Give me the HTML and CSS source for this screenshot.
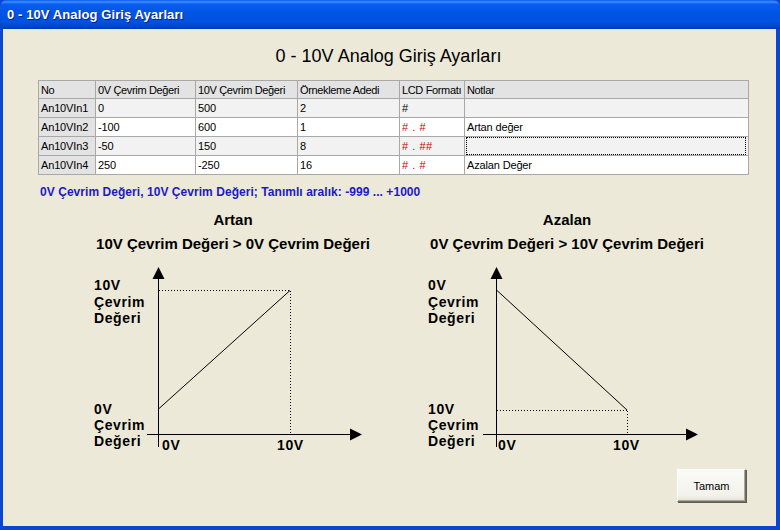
FILE: index.html
```html
<!DOCTYPE html>
<html lang="tr">
<head>
<meta charset="utf-8">
<title>0 - 10V Analog Giriş Ayarları</title>
<link rel="stylesheet" href="styles.css">
</head>
<body>
<div class="window">
  <div class="titlebar"><span class="title-text">0 - 10V Analog Giriş Ayarları</span></div>
  <div class="content">
    <h1 class="heading">0 - 10V Analog Giriş Ayarları</h1>
    <table class="grid">
      <colgroup>
        <col class="c-no"><col class="c-0v"><col class="c-10v"><col class="c-ornek"><col class="c-lcd"><col class="c-not">
      </colgroup>
      <thead>
        <tr><th>No</th><th>0V Çevrim Değeri</th><th>10V Çevrim Değeri</th><th>Örnekleme Adedi</th><th>LCD Formatı</th><th>Notlar</th></tr>
      </thead>
      <tbody>
        <tr class="odd"><td class="rowhead">An10VIn1</td><td>0</td><td>500</td><td>2</td><td class="fmt">#</td><td></td></tr>
        <tr class="even"><td class="rowhead">An10VIn2</td><td>-100</td><td>600</td><td>1</td><td class="fmt red">#&nbsp;.&nbsp;#</td><td>Artan değer</td></tr>
        <tr class="odd"><td class="rowhead">An10VIn3</td><td>-50</td><td>150</td><td>8</td><td class="fmt red">#&nbsp;.&nbsp;##</td><td class="focus"><div class="focus-box"></div></td></tr>
        <tr class="even"><td class="rowhead">An10VIn4</td><td>250</td><td>-250</td><td>16</td><td class="fmt red">#&nbsp;.&nbsp;#</td><td>Azalan Değer</td></tr>
      </tbody>
    </table>
    <p class="note">0V Çevrim Değeri, 10V Çevrim Değeri; Tanımlı aralık: -999 ... +1000</p>
    <div class="charts">
      <div class="chart">
        <div class="chart-title">Artan</div>
        <div class="chart-sub">10V Çevrim Değeri &gt; 0V Çevrim Değeri</div>
        <svg class="plot" width="334" height="200" viewBox="0 0 334 200">
          <line x1="92.5" y1="20" x2="92.5" y2="192" stroke="#000" stroke-width="1"/>
          <polygon points="92.5,12 86.5,24 98.5,24" fill="#000"/>
          <line x1="81" y1="179.5" x2="288" y2="179.5" stroke="#000" stroke-width="1"/>
          <polygon points="296,179.5 284,173.5 284,185.5" fill="#000"/>
          <line x1="93" y1="35.5" x2="224" y2="35.5" stroke="#000" stroke-width="1" stroke-dasharray="1 2"/>
          <line x1="224.5" y1="36" x2="224.5" y2="179" stroke="#000" stroke-width="1" stroke-dasharray="1 2"/>
          <line x1="92.5" y1="154" x2="224" y2="35.5" stroke="#000" stroke-width="1"/>
          <text x="28" y="35">10V</text>
          <text x="28" y="52">Çevrim</text>
          <text x="28" y="68">Değeri</text>
          <text x="28" y="159">0V</text>
          <text x="28" y="175">Çevrim</text>
          <text x="28" y="191">Değeri</text>
          <text x="96" y="195">0V</text>
          <text x="211" y="195">10V</text>
        </svg>
      </div>
      <div class="chart">
        <div class="chart-title">Azalan</div>
        <div class="chart-sub">0V Çevrim Değeri &gt; 10V Çevrim Değeri</div>
        <svg class="plot" width="334" height="200" viewBox="0 0 334 200">
          <line x1="96.5" y1="20" x2="96.5" y2="192" stroke="#000" stroke-width="1"/>
          <polygon points="96.5,12 90.5,24 102.5,24" fill="#000"/>
          <line x1="83" y1="179.5" x2="290" y2="179.5" stroke="#000" stroke-width="1"/>
          <polygon points="298,179.5 286,173.5 286,185.5" fill="#000"/>
          <line x1="97" y1="155.5" x2="227" y2="155.5" stroke="#000" stroke-width="1" stroke-dasharray="1 2"/>
          <line x1="227.5" y1="156" x2="227.5" y2="179" stroke="#000" stroke-width="1" stroke-dasharray="1 2"/>
          <line x1="96.5" y1="35" x2="227" y2="155" stroke="#000" stroke-width="1"/>
          <text x="28" y="35">0V</text>
          <text x="28" y="52">Çevrim</text>
          <text x="28" y="68">Değeri</text>
          <text x="28" y="159">10V</text>
          <text x="28" y="175">Çevrim</text>
          <text x="28" y="191">Değeri</text>
          <text x="98" y="195">0V</text>
          <text x="213" y="195">10V</text>
        </svg>
      </div>
    </div>
    <div class="actions">
      <button class="btn" type="button">Tamam</button>
    </div>
  </div>
</div>
</body>
</html>
```

FILE: styles.css
```css
html, body {
  margin: 0;
  padding: 0;
  background: #ECE9D8;
}

.window {
  width: 780px;
  height: 530px;
  display: flex;
  flex-direction: column;
  background: #0a45d6;
  font-family: "Liberation Sans", Arial, sans-serif;
  color: #000;
  overflow: hidden;
}

.titlebar {
  height: 29px;
  flex: none;
  display: flex;
  align-items: center;
  padding-left: 7px;
  border-radius: 7px 7px 0 0;
  background: linear-gradient(to bottom, #0a5fea 0%, #3d8eff 7%, #0a5cf0 14%, #0055e5 45%, #0052e0 75%, #0048cc 90%, #0038b0 100%);
}

.title-text {
  color: #fff;
  font-weight: bold;
  font-size: 13px;
  letter-spacing: 0.1px;
  text-shadow: 1px 1px 0 #0a1e80;
  margin-top: -1px;
}

.content {
  flex: 1;
  margin: 0 4px 4px 3px;
  background: #ECE9D8;
  display: flex;
  flex-direction: column;
}

.heading {
  margin: 16px 0 0 0;
  font-size: 18px;
  line-height: 22px;
  font-weight: normal;
  text-align: center;
  padding-right: 2px;
}

.grid {
  margin: 13px 0 0 35px;
  width: 710px;
  border-collapse: collapse;
  table-layout: fixed;
  border: 1px solid #000;
  font-size: 11px;
  letter-spacing: -0.15px;
}

.c-no { width: 57px; }
.c-0v { width: 100px; }
.c-10v { width: 102px; }
.c-ornek { width: 102px; }
.c-lcd { width: 65px; }
.c-not { width: 284px; }

.grid th,
.grid td {
  border: 1px solid #a8a8a8;
  padding: 0 0 0 2px;
  text-align: left;
  font-weight: normal;
  white-space: nowrap;
  overflow: hidden;
}

.grid th {
  height: 17px;
  background: #e3e3e3;
  letter-spacing: -0.35px;
}

.grid td {
  height: 18px;
}

.grid tr.odd td { background: #f2f2f2; }
.grid tr.even td { background: #ffffff; }
.grid tr td.rowhead { background: #e3e3e3; }

.fmt {
  padding-left: 3px;
  word-spacing: 0.5px;
  letter-spacing: 0.3px;
}

.red { color: #cc0000; }

.grid td.focus {
  padding: 0;
}

.focus-box {
  height: 16px;
  margin: 0 2px 0 1px;
  border: 1px dotted #000;
}

.note {
  margin: 11px 0 0 37px;
  font-size: 12px;
  line-height: 13px;
  font-weight: bold;
  letter-spacing: 0.05px;
  color: #1a1acc;
}

.charts {
  margin: 12px 0 0 63px;
  width: 668px;
  display: grid;
  grid-template-columns: 334px 334px;
}

.chart {
  display: flex;
  flex-direction: column;
}

.chart-title,
.chart-sub {
  font-size: 15px;
  line-height: 18px;
  font-weight: bold;
  text-align: center;
}

.chart-sub {
  margin-top: 6px;
}

.plot {
  display: block;
  margin-top: 2px;
  font-family: "Liberation Sans", Arial, sans-serif;
  font-size: 14px;
  letter-spacing: 0.6px;
  font-weight: bold;
}

.actions {
  margin-top: auto;
  display: flex;
  justify-content: flex-end;
  padding: 0 30px 24px 0;
}

.btn {
  width: 69px;
  height: 33px;
  font-family: "Liberation Sans", Arial, sans-serif;
  font-size: 11px;
  color: #000;
  background: linear-gradient(to bottom, #fbfbf8 0%, #f2f1ea 85%, #e3e1d5 100%);
  border: 1px solid;
  border-color: #ffffff #716f64 #716f64 #ffffff;
  box-shadow: inset -1px -1px 0 #aca899, 1px 1px 0 #5f5d54;
  padding: 0;
}
```
